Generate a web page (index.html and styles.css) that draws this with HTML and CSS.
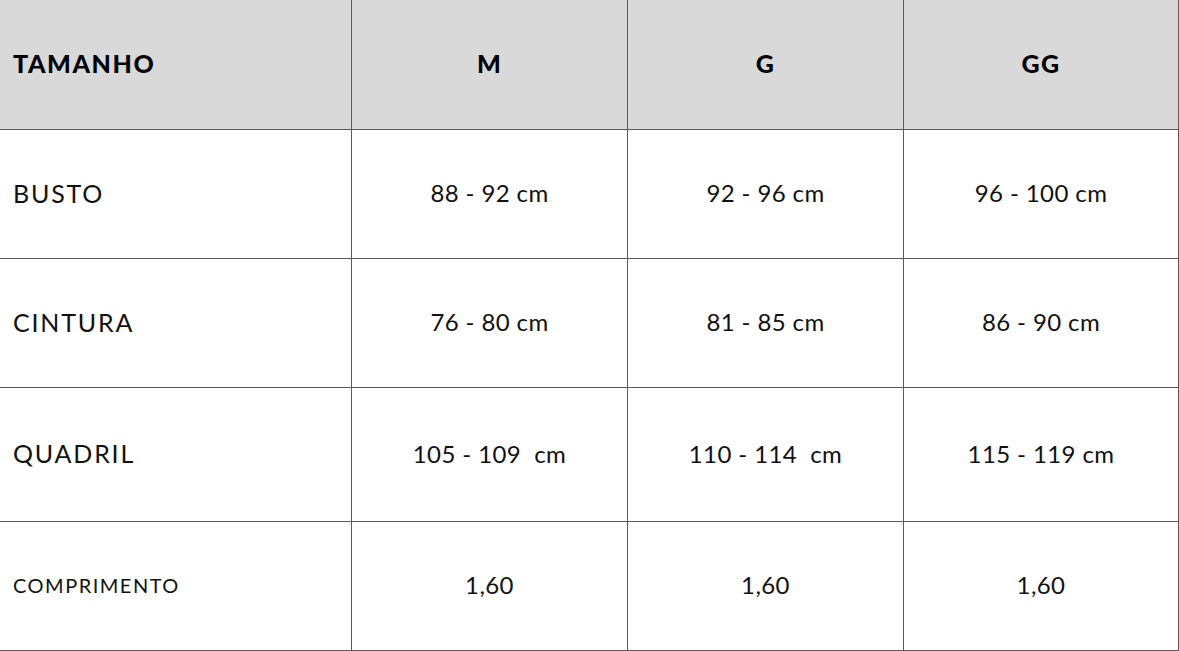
FILE: index.html
```html
<!DOCTYPE html>
<html lang="pt">
<head>
<meta charset="utf-8">
<title>Tabela de medidas</title>
<link rel="stylesheet" href="styles.css">
</head>
<body>
<div class="table">
  <div class="row head">
    <div class="cell label">TAMANHO</div>
    <div class="cell">M</div>
    <div class="cell">G</div>
    <div class="cell last">GG</div>
  </div>
  <div class="row">
    <div class="cell label">BUSTO</div>
    <div class="cell">88 - 92 cm</div>
    <div class="cell">92 - 96 cm</div>
    <div class="cell last">96 - 100 cm</div>
  </div>
  <div class="row">
    <div class="cell label">CINTURA</div>
    <div class="cell">76 - 80 cm</div>
    <div class="cell">81 - 85 cm</div>
    <div class="cell last">86 - 90 cm</div>
  </div>
  <div class="row tall">
    <div class="cell label">QUADRIL</div>
    <div class="cell">105 - 109  cm</div>
    <div class="cell">110 - 114  cm</div>
    <div class="cell last">115 - 119 cm</div>
  </div>
  <div class="row">
    <div class="cell label small">COMPRIMENTO</div>
    <div class="cell">1,60</div>
    <div class="cell">1,60</div>
    <div class="cell last">1,60</div>
  </div>
</div>
</body>
</html>
```
FILE: styles.css
```css
html, body {
  margin: 0;
  padding: 0;
  background: #ffffff;
}

.table {
  width: 1179px;
  height: 651px;
  display: flex;
  flex-direction: column;
  font-family: "Lato", "Inter", sans-serif;
  color: #111111;
}

.row {
  display: grid;
  grid-template-columns: 352px 276px 276px 275px;
  height: 129px;
  box-sizing: border-box;
  border-bottom: 1px solid #5a5a5a;
}

.row.head {
  height: 130px;
  background: #d9d9d9;
  font-weight: 900;
  color: #000000;
}

.row.tall {
  height: 134px;
}

.cell {
  display: flex;
  align-items: center;
  justify-content: center;
  padding-bottom: 3px;
  border-right: 1px solid #5a5a5a;
  font-size: 24px;
  white-space: pre;
  letter-spacing: 0.4px;
}

.row.head .cell {
  font-size: 25px;
  letter-spacing: 1.4px;
}

.cell.label {
  justify-content: flex-start;
  padding-left: 13px;
  font-size: 25px;
  letter-spacing: 1.8px;
}

.row.head .cell.label {
  letter-spacing: 1.6px;
}

.cell.label.small {
  font-size: 20px;
  letter-spacing: 1.5px;
}
```
